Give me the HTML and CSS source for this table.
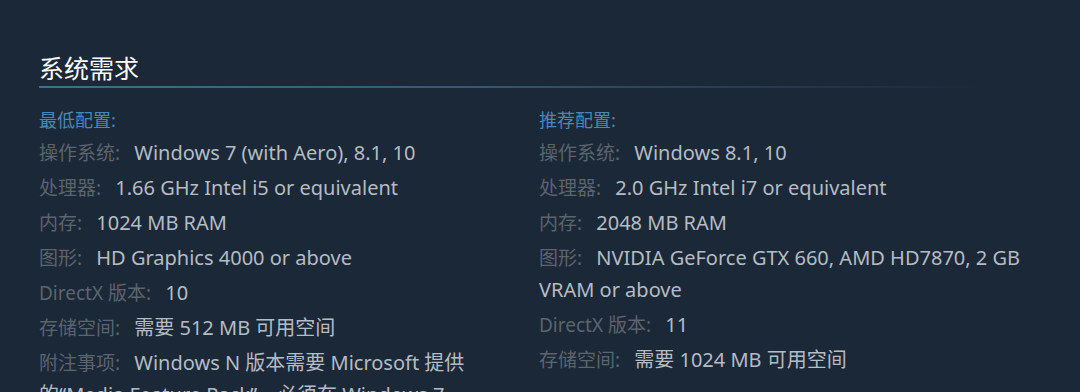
FILE: index.html
```html
<!DOCTYPE html>
<html lang="zh-CN">
<head>
<meta charset="utf-8">
<title>系统需求</title>
<link rel="stylesheet" href="styles.css">
</head>
<body>
<section class="sysreq">
  <h2 class="sysreq-title">系统需求</h2>
  <div class="sysreq-cols">
    <div class="col">
      <div class="col-head">最低配置:</div>
      <ul class="req-list">
        <li><span class="label">操作系统:</span> Windows 7 (with Aero), 8.1, 10</li>
        <li><span class="label">处理器:</span> 1.66 GHz Intel i5 or equivalent</li>
        <li><span class="label">内存:</span> 1024 MB RAM</li>
        <li><span class="label">图形:</span> HD Graphics 4000 or above</li>
        <li><span class="label">DirectX 版本:</span> 10</li>
        <li><span class="label">存储空间:</span> 需要 512 MB 可用空间</li>
        <li><span class="label">附注事项:</span> Windows N 版本需要 Microsoft 提供的“Media Feature Pack”，必须在 Windows 7 上启用 Aero。</li>
      </ul>
    </div>
    <div class="col">
      <div class="col-head">推荐配置:</div>
      <ul class="req-list">
        <li><span class="label">操作系统:</span> Windows 8.1, 10</li>
        <li><span class="label">处理器:</span> 2.0 GHz Intel i7 or equivalent</li>
        <li><span class="label">内存:</span> 2048 MB RAM</li>
        <li><span class="label">图形:</span> NVIDIA GeForce GTX 660, AMD HD7870, 2 GB VRAM or above</li>
        <li><span class="label">DirectX 版本:</span> 11</li>
        <li><span class="label">存储空间:</span> 需要 1024 MB 可用空间</li>
      </ul>
    </div>
  </div>
</section>
</body>
</html>
```
FILE: styles.css
```css
html, body {
  margin: 0;
  padding: 0;
  background: #1b2838;
  overflow: hidden;
}
body {
  font-family: "Noto Sans", "Noto Sans CJK SC", sans-serif;
  color: #acb2b8;
}
.sysreq {
  padding: 50px 39px 0 39px;
}
.sysreq-title {
  margin: 0;
  font-size: 25px;
  font-weight: normal;
  color: #ffffff;
  line-height: 36px;
}
.sysreq-title::after {
  content: "";
  display: block;
  height: 2px;
  background: linear-gradient(to right, #3f7090 0%, #335a78 45%, rgba(44,74,100,0.6) 75%, rgba(27,40,56,0) 100%);
  width: 940px;
}
.sysreq-cols {
  display: grid;
  grid-template-columns: 430px 1fr;
  column-gap: 70px;
  margin-top: 18px;
}
.col-head {
  color: #4a87b6;
  font-size: 18px;
  line-height: 28px;
  margin-bottom: 3px;
}
.req-list {
  list-style: none;
  margin: 0;
  padding: 0;
  font-size: 20px;
  line-height: 32px;
}
.req-list li {
  margin-bottom: 3px;
  color: #b5bcc3;
}
.label {
  font-size: 19px;
  color: #5c646d;
  margin-right: 9px;
}
```
